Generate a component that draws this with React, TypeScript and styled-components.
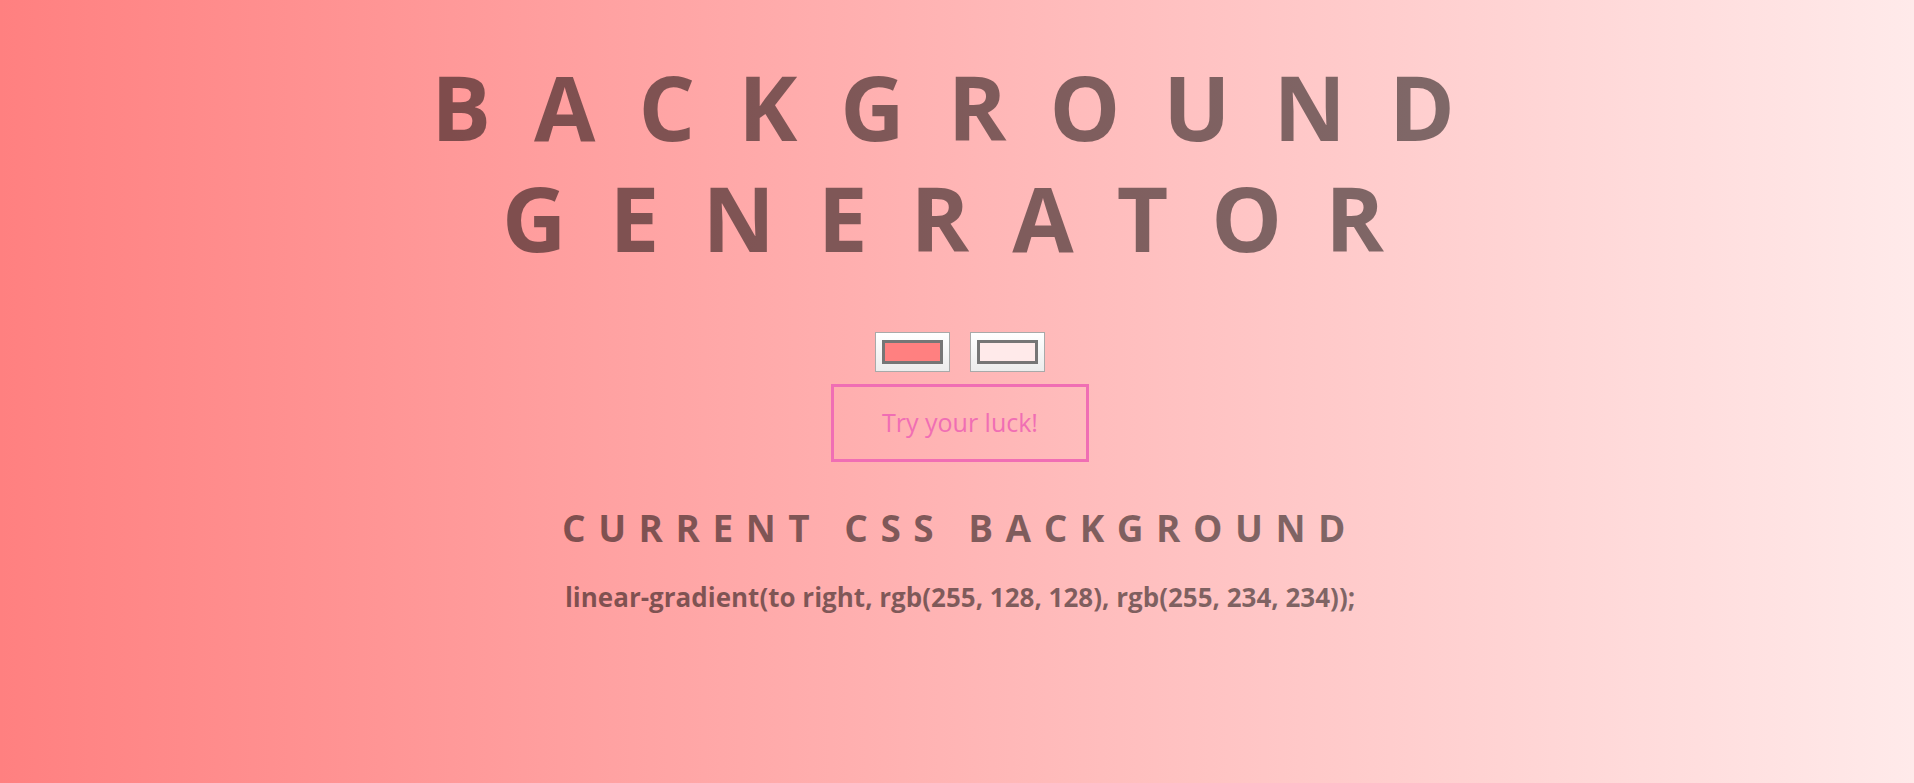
import React from "react";
import styled, { createGlobalStyle } from "styled-components";

const GlobalStyle = createGlobalStyle`
  html, body {
    margin: 0;
    padding: 0;
    height: 100%;
  }
  body {
    font-family: "Open Sans", "Liberation Sans", sans-serif;
  }
`;

const Page = styled.div<{ $from: string; $to: string }>`
  min-height: 100vh;
  box-sizing: border-box;
  background: linear-gradient(to right, ${(p) => p.$from}, ${(p) => p.$to});
  display: flex;
  flex-direction: column;
  align-items: center;
  padding: 51px 0 0 6px;
  color: rgba(0, 0, 0, 0.5);
  font-family: "Open Sans", "Liberation Sans", sans-serif;
`;

const Title = styled.h1`
  margin: 0;
  box-sizing: border-box;
  padding-left: 9px;
  font-size: 89px;
  line-height: 111px;
  font-weight: 700;
  letter-spacing: 43px;
  text-align: center;
  width: 1200px;
`;

const Pickers = styled.div`
  display: flex;
  gap: 20px;
  margin-top: 59px;
`;

const ColorInput = styled.input`
  -webkit-appearance: none;
  appearance: none;
  box-sizing: border-box;
  width: 75px;
  height: 40px;
  padding: 7px 6px;
  margin: 0;
  border: 1px solid #a9a9a9;
  border-radius: 0;
  background: linear-gradient(#ffffff, #ececec);
  cursor: pointer;

  &::-webkit-color-swatch-wrapper {
    padding: 0;
  }
  &::-webkit-color-swatch {
    border: 3px solid #767676;
    border-radius: 0;
  }
`;

const LuckButton = styled.button`
  margin-top: 12px;
  box-sizing: border-box;
  width: 258px;
  height: 78px;
  padding: 0 0 2px;
  background: transparent;
  border: 3px solid rgb(240, 110, 180);
  color: rgb(240, 110, 180);
  font-family: "Open Sans", "Liberation Sans", sans-serif;
  font-size: 25px;
  font-weight: 400;
  cursor: pointer;
`;

const Subtitle = styled.h3`
  margin: 40px 0 0;
  font-size: 37px;
  font-weight: 700;
  letter-spacing: 12.5px;
  text-align: center;
`;

const CssText = styled.h3`
  margin: 26px 0 0;
  font-size: 26px;
  font-weight: 700;
  text-align: center;
`;

export default function App() {
  const [c1, setC1] = React.useState("#ff8080");
  const [c2, setC2] = React.useState("#ffeaea");

  const hexToRgb = (h: string) => {
    const n = parseInt(h.slice(1), 16);
    return `rgb(${(n >> 16) & 255}, ${(n >> 8) & 255}, ${n & 255})`;
  };

  const randomHex = () =>
    "#" +
    Math.floor(Math.random() * 0xffffff)
      .toString(16)
      .padStart(6, "0");

  return (
    <>
      <GlobalStyle />
      <Page $from={c1} $to={c2}>
        <Title>BACKGROUND GENERATOR</Title>
        <Pickers>
          <ColorInput type="color" value={c1} onChange={(e) => setC1(e.target.value)} />
          <ColorInput type="color" value={c2} onChange={(e) => setC2(e.target.value)} />
        </Pickers>
        <LuckButton
          onClick={() => {
            setC1(randomHex());
            setC2(randomHex());
          }}
        >
          Try your luck!
        </LuckButton>
        <Subtitle>CURRENT CSS BACKGROUND</Subtitle>
        <CssText>
          linear-gradient(to right, {hexToRgb(c1)}, {hexToRgb(c2)});
        </CssText>
      </Page>
    </>
  );
}
